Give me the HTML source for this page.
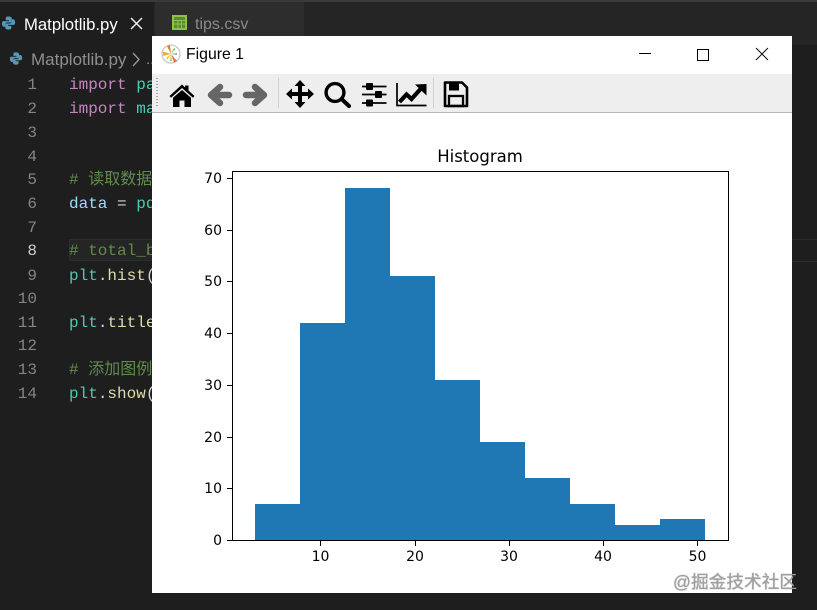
<!DOCTYPE html>
<html><head><meta charset="utf-8">
<style>
html,body{margin:0;padding:0;background:#1e1e1e;width:817px;height:610px;overflow:hidden}
#r{position:relative;width:817px;height:610px;overflow:hidden;background:#1e1e1e;font-family:"Liberation Sans","Noto Sans CJK SC",sans-serif}
.a{position:absolute}
.ln{position:absolute;left:0;width:37px;text-align:right;font:16px/24px "Liberation Mono",monospace;color:#858585;white-space:pre}
.c{position:absolute;left:69px;font:16px/24px "Liberation Mono","Noto Sans CJK SC",monospace;color:#d4d4d4;white-space:pre}
.k{color:#c586c0}.t{color:#4ec9b0}.g{color:#5f8c4c}.v{color:#9cdcfe}.f{color:#dcdcaa}
</style></head><body><div id="r">
<div class="a" style="left:0;top:0;width:817px;height:45px;background:#252526"></div>
<div class="a" style="left:0;top:0;width:817px;height:2px;background:#3a3a3a"></div>
<div class="a" style="left:0;top:2px;width:154px;height:43px;background:#1e1e1e"></div>
<div class="a" style="left:155px;top:2px;width:149px;height:43px;background:#2d2d2d"></div>
<svg class="a" style="left:1px;top:15px" width="15" height="16" viewBox="0 0 16 16"><path d="M8 1C5 1 5 2 5 4v1h3.500v1H3C1 6 1 7.500 1 9s1 3 2 3h1.500v-2c0-1.500 1-2.500 2.500-2.500h3c1 0 1.500-.5 1.500-1.500V3.500C11.500 2 10.500 1 8 1z" fill="#519aba"/><path d="M8 15c3 0 3-1 3-3v-1H7.500v-1H13c2 0 2-1.500 2-3s-1-3-2-3h-1.500v2c0 1.500-1 2.500-2.500 2.500H6C5 8.500 4.500 9 4.500 10v2.500C4.500 14 5.500 15 8 15z" fill="#519aba"/></svg>
<div class="a" style="left:24px;top:14px;font-size:16.700px;line-height:22px;color:#fff">Matplotlib.py</div>
<svg class="a" style="left:130px;top:17px" width="13" height="13" viewBox="0 0 13 13"><path d="M1 1L12 12M12 1L1 12" stroke="#eee" stroke-width="1.500"/></svg>
<svg class="a" style="left:172px;top:15px" width="15" height="15" viewBox="0 0 15 15"><rect width="15" height="15" fill="#8bc34a"/><rect x="2" y="2" width="11" height="11" fill="#5d8a2c"/><path d="M2 5.500h11M2 9h11M6 5v8M9.500 5v8" stroke="#8bc34a" stroke-width="1"/></svg>
<div class="a" style="left:195px;top:14px;font-size:16px;line-height:22px;color:#8a8a8a">tips.csv</div>
<svg class="a" style="left:9px;top:51px" width="14" height="15" viewBox="0 0 16 16"><path d="M8 1C5 1 5 2 5 4v1h3.500v1H3C1 6 1 7.500 1 9s1 3 2 3h1.500v-2c0-1.500 1-2.500 2.500-2.500h3c1 0 1.500-.5 1.500-1.500V3.500C11.500 2 10.500 1 8 1z" fill="#519aba"/><path d="M8 15c3 0 3-1 3-3v-1H7.500v-1H13c2 0 2-1.500 2-3s-1-3-2-3h-1.500v2c0 1.500-1 2.500-2.500 2.500H6C5 8.500 4.500 9 4.500 10v2.500C4.500 14 5.500 15 8 15z" fill="#519aba"/></svg>
<div class="a" style="left:31px;top:49px;font-size:17px;line-height:22px;color:#8f8f8f;white-space:pre">Matplotlib.py</div>
<svg class="a" style="left:131px;top:52px" width="10" height="15" viewBox="0 0 10 15"><path d="M2 1l6 6.500L2 14" fill="none" stroke="#9a9a9a" stroke-width="1.300"/></svg>
<div class="a" style="left:146px;top:49px;font-size:15px;line-height:22px;color:#8f8f8f">..</div>

<div class="a" style="left:69px;top:239px;width:83px;height:22px;background:#252525;border:1px solid #2c2c2c;border-right:0;box-sizing:border-box"></div>
<div class="a" style="left:792px;top:239px;width:25px;height:23px;background:#1e1e1e;border-top:1px solid #2b2b2b;border-bottom:1px solid #2b2b2b;box-sizing:border-box"></div>

<div class="ln" style="top:73px">1</div><div class="ln" style="top:97px">2</div><div class="ln" style="top:121px">3</div><div class="ln" style="top:145px">4</div><div class="ln" style="top:168px">5</div><div class="ln" style="top:192px">6</div><div class="ln" style="top:216px">7</div><div class="ln" style="top:239px;color:#d0d0d0">8</div><div class="ln" style="top:264px">9</div><div class="ln" style="top:287px">10</div><div class="ln" style="top:311px">11</div><div class="ln" style="top:334px">12</div><div class="ln" style="top:358px">13</div><div class="ln" style="top:382px">14</div>

<div class="c" style="top:73px"><span class="k">import</span> <span class="t">pandas</span></div>
<div class="c" style="top:97px"><span class="k">import</span> <span class="t">matplotlib</span></div>
<div class="c g" style="top:168px"># 读取数据</div>
<div class="c" style="top:192px"><span class="v">data</span> = <span class="t">pd</span></div>
<div class="c g" style="top:239px"># total_bill</div>
<div class="c" style="top:264px"><span class="t">plt</span>.<span class="f">hist</span>(</div>
<div class="c" style="top:311px"><span class="t">plt</span>.<span class="f">title</span>(</div>
<div class="c g" style="top:358px"># 添加图例</div>
<div class="c" style="top:382px"><span class="t">plt</span>.<span class="f">show</span>(</div>

<!-- window -->
<div class="a" style="left:152px;top:36px;width:640px;height:557px;background:#fff"></div>
<svg class="a" style="left:160px;top:43px" width="22" height="22" viewBox="0 0 22 22">
<circle cx="11" cy="11" r="9" fill="#fff" stroke="#c9c9c9" stroke-width="1.300"/>
<path d="M11 11L7 3l3-.8z" fill="#e8762b"/><path d="M11 11L3 8.500 2.800 13z" fill="#f2b01e"/><path d="M11 11l6 7-3 1.500z" fill="#e8762b"/><path d="M11 11l3-6 1.500 1z" fill="#8dc24a"/><path d="M11 11l-1 7h2z" fill="#9ad06a"/><path d="M11 11l-5 4 1.500 1.500z" fill="#f0c04a"/><path d="M11 11l6-1v2z" fill="#7ea6d8"/>
</svg>
<div class="a" style="left:186px;top:45px;font-size:15.800px;line-height:20px;color:#000">Figure 1</div>
<svg class="a" style="left:636px;top:44px" width="140" height="20" viewBox="0 0 140 20" shape-rendering="crispEdges"><path d="M3 9.500h12" stroke="#000"/><rect x="61.500" y="5.500" width="11" height="11" fill="none" stroke="#000"/></svg>
<svg class="a" style="left:755px;top:47px" width="14" height="14" viewBox="0 0 14 14"><path d="M1 1l12 12M13 1L1 13" stroke="#111" stroke-width="1"/></svg>

<div class="a" style="left:152px;top:74px;width:640px;height:38px;background:#eeeeee"></div>
<div class="a" style="left:152px;top:112px;width:640px;height:1px;background:#b8b8b8"></div>
<div class="a" style="left:156px;top:78px;width:2px;height:30px;background:repeating-linear-gradient(#aaa 0 1px,transparent 1px 3px)"></div>
<div class="a" style="left:278px;top:78px;width:1px;height:30px;background:#d2d2d2"></div>
<div class="a" style="left:433px;top:78px;width:1px;height:30px;background:#d2d2d2"></div>

<svg class="a" style="left:152px;top:74px" width="330" height="38" viewBox="152 74 330 38">
<!-- home -->
<path d="M182 84.500L169.500 96l1.600 1.800L182 88l10.900 9.800 1.600-1.800-6-5.500V85.500h-3.400v2z" fill="#000"/>
<path d="M182 90L173 97.800V107h6.500v-6.500h5V107H191V97.800z" fill="#000"/>
<!-- back -->
<path d="M220 87l-9 8 9 8M212 95h17" fill="none" stroke="#666" stroke-width="6.500" stroke-linecap="round" stroke-linejoin="round"/>
<!-- forward -->
<path d="M255 87l9 8-9 8M263 95h-17" fill="none" stroke="#666" stroke-width="6.500" stroke-linecap="round" stroke-linejoin="round"/>
<!-- move -->
<path d="M300 80l5.500 6h-3.500v6h6v-3.500l6 5.500-6 5.500V96h-6v6h3.500l-5.500 6-5.500-6h3.500v-6h-6v3.500L286 94l6-5.500V92h6v-6h-3.500z" fill="#000"/>
<!-- zoom -->
<circle cx="335" cy="92.500" r="8.900" fill="none" stroke="#000" stroke-width="3.400"/>
<path d="M341.500 99l7.500 7" stroke="#000" stroke-width="4" stroke-linecap="round"/>
<!-- sliders -->
<path d="M362 86.500h24.500M362 94.500h24.500M362 103h24.500" stroke="#000" stroke-width="1.800"/>
<rect x="366" y="83" width="7" height="7" rx="1" fill="#000"/><rect x="375" y="91" width="7" height="7" rx="1" fill="#000"/><rect x="366" y="99.500" width="7" height="7" rx="1" fill="#000"/>
<!-- chart -->
<path d="M397 83v22.500h29.500" fill="none" stroke="#000" stroke-width="1.700"/>
<path d="M399.500 102l7-7.500 5 4.500 9.500-10.500" fill="none" stroke="#000" stroke-width="4.200"/>
<path d="M415 84.500l11.500-.5v11.500z" fill="#000"/>
<!-- save -->
<path d="M445 82.500h17l5 5v18.500h-22z" fill="none" stroke="#000" stroke-width="2.600" stroke-linejoin="round"/>
<rect x="449" y="83" width="10" height="7.500" fill="#000"/>
<rect x="449" y="96" width="14" height="10" fill="none" stroke="#000" stroke-width="2.300"/>
</svg>

<!-- plot -->
<svg class="a" style="left:0;top:0" width="817" height="610" viewBox="0 0 817 610">
<g fill="#1f77b4" shape-rendering="crispEdges">
<rect x="255" y="504" width="45" height="36"/><rect x="300" y="323" width="45" height="217"/><rect x="345" y="188" width="45" height="352"/><rect x="390" y="276" width="45" height="264"/><rect x="435" y="380" width="45" height="160"/><rect x="480" y="442" width="45" height="98"/><rect x="525" y="478" width="45" height="62"/><rect x="570" y="504" width="45" height="36"/><rect x="615" y="525" width="45" height="15"/><rect x="660" y="519" width="45" height="21"/>
</g>
<rect x="232.500" y="171.500" width="496" height="369" fill="none" stroke="#000" stroke-width="1" shape-rendering="crispEdges"/>
<path d="M320.500 541v5M415.500 541v5M509.500 541v5M603.500 541v5M697.500 541v5M232 540.500h-5M232 488.500h-5M232 437.500h-5M232 385.500h-5M232 333.500h-5M232 281.500h-5M232 230.500h-5M232 178.500h-5" stroke="#000" stroke-width="1" shape-rendering="crispEdges"/>
<g font-family="'DejaVu Sans',sans-serif" font-size="14" fill="#000">
<text x="320.500" y="561" text-anchor="middle">10</text><text x="415" y="561" text-anchor="middle">20</text><text x="509" y="561" text-anchor="middle">30</text><text x="603" y="561" text-anchor="middle">40</text><text x="697.500" y="561" text-anchor="middle">50</text>
<text x="222" y="545" text-anchor="end">0</text><text x="222" y="493" text-anchor="end">10</text><text x="222" y="442" text-anchor="end">20</text><text x="222" y="390" text-anchor="end">30</text><text x="222" y="338" text-anchor="end">40</text><text x="222" y="286" text-anchor="end">50</text><text x="222" y="235" text-anchor="end">60</text><text x="222" y="183" text-anchor="end">70</text>
<text x="480" y="162" text-anchor="middle" font-size="16.500">Histogram</text>
</g>
</svg>
<div class="a" style="left:673px;top:571px;font-size:17.700px;line-height:22px;color:#a0a0a0;white-space:pre;font-family:'Liberation Sans','Noto Sans CJK SC',sans-serif;text-shadow:0 0 1px rgba(60,60,60,.6)">@掘金技术社区</div>
</div></body></html>
